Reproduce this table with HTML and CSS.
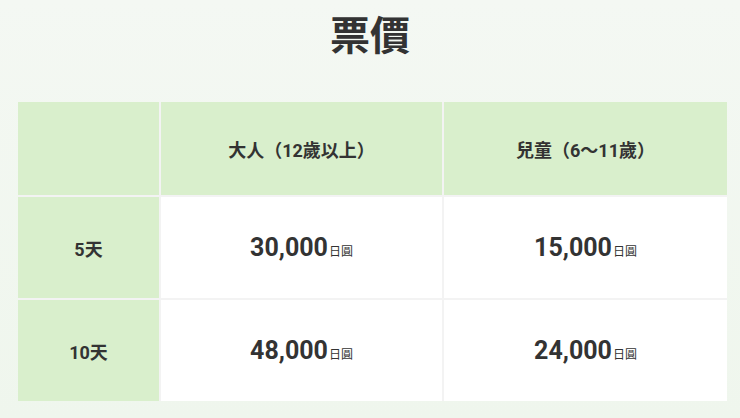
FILE: index.html
```html
<!DOCTYPE html>
<html lang="zh-Hant">
<head>
<meta charset="utf-8">
<title>票價</title>
<link rel="stylesheet" href="styles.css">
</head>
<body>
<main class="page">
  <h1 class="title">票價</h1>
  <div class="price-table">
    <div class="cell head"></div>
    <div class="cell head">大人（12歲以上）</div>
    <div class="cell head">兒童（6～11歲）</div>

    <div class="cell head">5天</div>
    <div class="cell data"><span class="amount">30,000</span><span class="unit">日圓</span></div>
    <div class="cell data"><span class="amount">15,000</span><span class="unit">日圓</span></div>

    <div class="cell head">10天</div>
    <div class="cell data"><span class="amount">48,000</span><span class="unit">日圓</span></div>
    <div class="cell data"><span class="amount">24,000</span><span class="unit">日圓</span></div>
  </div>
</main>
</body>
</html>
```
FILE: styles.css
```css
html, body {
  margin: 0;
  padding: 0;
}
body {
  width: 740px;
  height: 418px;
  overflow: hidden;
  background: linear-gradient(180deg, #f4f8f3 0%, #eff6ed 100%);
  font-family: Roboto, "Noto Sans CJK TC", sans-serif;
  color: #333;
}
.page {
  padding: 9px 0 0 18px;
}
.title {
  margin: 0 0 0 -18px;
  text-align: center;
  font-size: 40px;
  line-height: 48px;
  font-weight: 700;
  color: #333;
  font-family: "Noto Sans CJK TC", sans-serif;
}
.price-table {
  margin-top: 45px;
  display: grid;
  grid-template-columns: 141px 281px 283px;
  grid-template-rows: 93px 101px 101px;
  gap: 2px;
  width: 709px;
  background: #f3f3f3;
}
.cell {
  display: flex;
  align-items: center;
  justify-content: center;
  font-size: 18px;
  font-weight: 700;
}
.head {
  background: #d9efcc;
}
.data {
  background: #ffffff;
  align-items: baseline;
  padding-top: 0;
  line-height: 101px;
}
.amount {
  font-size: 25px;
  font-weight: 700;
  color: #333;
}
.unit {
  font-size: 12px;
  font-weight: 400;
  color: #333;
  font-family: "Noto Sans CJK TC", sans-serif;
  margin-left: 1px;
}
```
